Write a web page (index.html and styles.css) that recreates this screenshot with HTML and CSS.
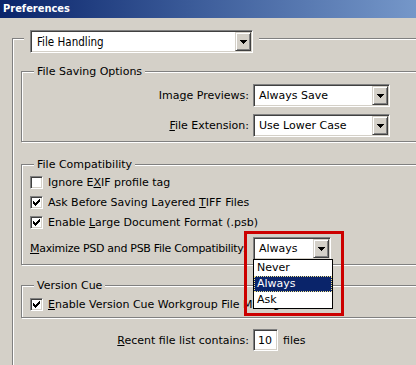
FILE: index.html
```html
<!DOCTYPE html>
<html>
<head>
<meta charset="utf-8">
<title>Preferences</title>
<link rel="stylesheet" href="styles.css">
</head>
<body>
<div class="titlebar">Preferences</div>
<div class="client">
  <div class="group outer">
    <div class="legend legend-select">
      <div class="combo combo-main">
        <span class="combo-text">File Handling</span>
        <span class="combo-btn"><svg width="7" height="4" viewBox="0 0 7 4" shape-rendering="crispEdges"><path d="M0 0h7v1h-1v1h-1v1h-1v1h-1v-1h-1v-1h-1v-1h-1z" fill="#000"/></svg></span>
      </div>
    </div>

    <div class="group saving">
      <div class="legend">File Saving Options</div>
      <div class="form-row first">
        <span class="row-label">Ima<u>g</u>e Previews:</span>
        <div class="combo combo-wide">
          <span class="combo-text">Always Save</span>
          <span class="combo-btn"><svg width="7" height="4" viewBox="0 0 7 4" shape-rendering="crispEdges"><path d="M0 0h7v1h-1v1h-1v1h-1v1h-1v-1h-1v-1h-1v-1h-1z" fill="#000"/></svg></span>
        </div>
      </div>
      <div class="form-row second">
        <span class="row-label"><u>F</u>ile Extension:</span>
        <div class="combo combo-wide">
          <span class="combo-text">Use Lower Case</span>
          <span class="combo-btn"><svg width="7" height="4" viewBox="0 0 7 4" shape-rendering="crispEdges"><path d="M0 0h7v1h-1v1h-1v1h-1v1h-1v-1h-1v-1h-1v-1h-1z" fill="#000"/></svg></span>
        </div>
      </div>
    </div>

    <div class="group compat">
      <div class="legend">File Compatibility</div>
      <div class="check-list">
        <div class="check-row"><span class="checkbox"></span><span>Ignore E<u>X</u>IF profile tag</span></div>
        <div class="check-row"><span class="checkbox checked"><svg width="7" height="7" viewBox="0 0 7 7" shape-rendering="crispEdges"><path d="M0 2h1v3h-1zM1 3h1v3h-1zM2 4h1v3h-1zM3 3h1v3h-1zM4 2h1v3h-1zM5 1h1v3h-1zM6 0h1v3h-1z" fill="#000"/></svg></span><span>Ask Before Saving Layered <u>T</u>IFF Files</span></div>
        <div class="check-row"><span class="checkbox checked"><svg width="7" height="7" viewBox="0 0 7 7" shape-rendering="crispEdges"><path d="M0 2h1v3h-1zM1 3h1v3h-1zM2 4h1v3h-1zM3 3h1v3h-1zM4 2h1v3h-1zM5 1h1v3h-1zM6 0h1v3h-1z" fill="#000"/></svg></span><span>Enable <u>L</u>arge Document Format (.psb)</span></div>
      </div>
      <div class="max-row">
        <span class="max-label"><u>M</u>aximize PSD and PSB File Compatibility:</span>
        <div class="combo combo-small">
          <span class="combo-text">Always</span>
          <span class="combo-btn"><svg width="7" height="4" viewBox="0 0 7 4" shape-rendering="crispEdges"><path d="M0 0h7v1h-1v1h-1v1h-1v1h-1v-1h-1v-1h-1v-1h-1z" fill="#000"/></svg></span>
        </div>
      </div>
    </div>

    <div class="group vcue">
      <div class="legend">Version Cue</div>
      <div class="check-row vcue-row"><span class="checkbox checked"><svg width="7" height="7" viewBox="0 0 7 7" shape-rendering="crispEdges"><path d="M0 2h1v3h-1zM1 3h1v3h-1zM2 4h1v3h-1zM3 3h1v3h-1zM4 2h1v3h-1zM5 1h1v3h-1zM6 0h1v3h-1z" fill="#000"/></svg></span><span class="clip-label"><u>E</u>nable Version Cue Workgroup File Management</span></div>
    </div>

    <div class="form-row recent-row">
      <span class="row-label"><u>R</u>ecent file list contains:</span>
      <div class="textbox">10</div>
      <span class="files">files</span>
    </div>
  </div>

  <ul class="dropdown-list">
    <li>Never</li>
    <li class="selected">Always</li>
    <li>Ask</li>
  </ul>
  <div class="highlight-box"></div>
</div>
</body>
</html>
```
FILE: styles.css
```css
html, body {
  margin: 0;
  padding: 0;
  overflow: hidden;
}
body {
  width: 416px;
  height: 365px;
  background: #d4d0c8;
  font-family: "DejaVu Sans", sans-serif;
  font-size: 11px;
  color: #000;
}
u { text-decoration: underline; text-underline-offset: 1px; }

.titlebar {
  height: 18px;
  line-height: 18px;
  padding-left: 3px;
  background: linear-gradient(to right, #0a246a 0%, #3a5a98 45%, #7597c9 100%);
  color: #fff;
  font-family: "DejaVu Sans Condensed", "DejaVu Sans", sans-serif;
  font-weight: bold;
  font-size: 11px;
}

.client {
  position: relative;
  display: flow-root;
  width: 470px;
}

.group {
  border: 1px solid #808080;
  box-shadow: inset 1px 1px 0 #fff, 1px 1px 0 #fff;
}
.legend {
  display: block;
  width: max-content;
  background: #d4d0c8;
  line-height: 13px;
  height: 13px;
  padding: 0 3px;
  margin: -7px 0 0 12px;
}

.outer {
  margin: 20px 0 0 12px;
  border-right: none;
  padding-bottom: 40px;
}
.legend-select {
  height: 23px;
  line-height: normal;
  padding: 0 6px;
  margin: -9px 0 0 11px;
}

.saving, .compat, .vcue {
  margin-left: 8px;
  margin-right: 0;
}
.saving { margin-top: 18px; padding-bottom: 4px; }
.compat { margin-top: 22px; padding-bottom: 4px; }
.vcue { margin-top: 20px; padding-bottom: 3px; }

/* combos */
.combo {
  box-sizing: border-box;
  display: flex;
  align-items: stretch;
  height: 22px;
  background: #fff;
  border: 1px solid;
  border-color: #808080 #fff #fff #808080;
  box-shadow: inset 1px 1px 0 #404040, inset -1px -1px 0 #d4d0c8;
  padding: 1px;
}
.combo-text {
  flex: 1;
  display: flex;
  align-items: center;
  padding-left: 4px;
  white-space: nowrap;
}
.combo-btn {
  box-sizing: border-box;
  width: 16px;
  display: flex;
  align-items: center;
  justify-content: center;
  background: #d4d0c8;
  border: 1px solid;
  border-color: #d4d0c8 #404040 #404040 #d4d0c8;
  box-shadow: inset 1px 1px 0 #fff, inset -1px -1px 0 #808080;
}
.combo-main {
  width: 223px;
  height: 23px;
  font-family: "DejaVu Sans Condensed", "DejaVu Sans", sans-serif;
  font-size: 11.5px;
}
.combo-main .combo-text { padding-left: 5px; }
.combo-wide { width: 137px; height: 23px; }
.combo-small { width: 78px; height: 23px; }

.form-row {
  display: flex;
  align-items: center;
}
.row-label {
  width: 227px;
  text-align: right;
  margin-right: 4px;
  white-space: nowrap;
}
.saving .first { margin-top: 6px; }
.saving .second { margin-top: 7px; }

.check-list { margin-top: 1px; }
.check-row {
  display: flex;
  align-items: center;
  height: 20px;
  padding-left: 8px;
  white-space: nowrap;
}
.checkbox {
  box-sizing: border-box;
  width: 13px;
  height: 13px;
  margin-right: 5px;
  background: #fff;
  border: 1px solid;
  border-color: #808080 #fff #fff #808080;
  box-shadow: inset 1px 1px 0 #404040, inset -1px -1px 0 #d4d0c8;
  display: flex;
  align-items: center;
  justify-content: center;
  flex-shrink: 0;
}

.max-row {
  display: flex;
  align-items: center;
  margin-top: 5px;
  padding-left: 8px;
}
.max-label {
  width: 223px;
  white-space: nowrap;
  letter-spacing: -0.3px;
}

.vcue-row { margin-top: 2px; }
.clip-label {
  display: block;
  width: 292px;
  overflow: hidden;
}

.recent-row {
  margin-top: 11px;
  padding-left: 9px;
}
.textbox {
  box-sizing: border-box;
  width: 25px;
  height: 22px;
  background: #fff;
  border: 1px solid;
  border-color: #808080 #fff #fff #808080;
  box-shadow: inset 1px 1px 0 #404040, inset -1px -1px 0 #d4d0c8;
  padding: 1px 0 0 4px;
  display: flex;
  align-items: center;
}
.files { margin-left: 5px; }

/* overlays */
.dropdown-list {
  position: absolute;
  left: 253px;
  top: 241px;
  width: 80px;
  box-sizing: border-box;
  margin: 0;
  padding: 0;
  list-style: none;
  background: #fff;
  border: 1px solid #000;
}
.dropdown-list li {
  height: 16px;
  line-height: 16px;
  padding-left: 3px;
}
.dropdown-list .selected {
  background: #0a246a;
  color: #fff;
  outline: 1px dotted #f2e48a;
  outline-offset: -1px;
}
.highlight-box {
  position: absolute;
  left: 244px;
  top: 213px;
  width: 100px;
  height: 85px;
  box-sizing: border-box;
  border: 3px solid #cc0000;
}
```
